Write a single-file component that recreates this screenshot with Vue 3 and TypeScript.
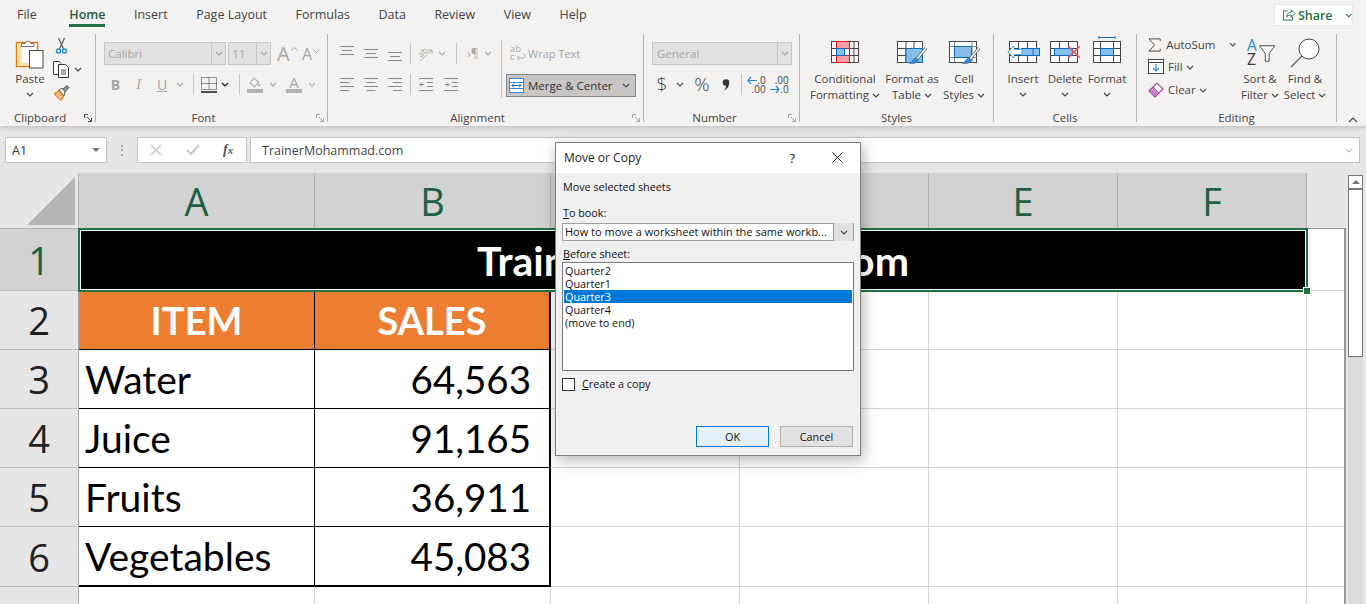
<template>
  <div class="app">
    <svg class="defs" width="0" height="0" aria-hidden="true">
      <symbol id="chev" viewBox="0 0 8 5"><path d="M1 1l3 3 3-3" fill="none" stroke="currentColor" stroke-width="1.1" /></symbol>
      <symbol id="launch" viewBox="0 0 9 9"><path d="M.5 4V.5H4M3 3l4 4M7.5 4v3.500H4" fill="none" stroke="currentColor" /></symbol>
    </svg>

    <header class="ribbon">
      <div class="tabs">
        <nav class="tab-list">
          <span v-for="t in tabs" :key="t" class="tab" :class="{ active: t === 'Home' }">{{ t }}</span>
        </nav>
        <div class="share">
          <svg width="15" height="14" viewBox="0 0 15 14"><path d="M6 2.500H1.500v10h10V9M5 9c0-3 2-5 5-5V1.500l4 4-4 4V7C8 7 6 7.500 5 9z" fill="none" stroke="#1e6e42" /></svg>
          <b>Share</b>
          <svg class="chev share-chev"><use href="#chev" /></svg>
        </div>
      </div>

      <div class="groups">
        <!-- clipboard -->
        <section class="group g-clip">
          <div class="body clip-body">
            <div class="big paste">
              <svg class="icon" width="30" height="32" viewBox="0 0 30 32">
                <rect x="1.500" y="5.500" width="21" height="24" fill="#fff" stroke="#e07b10" stroke-width="1.400" />
                <rect x="2.500" y="6.500" width="4" height="22" fill="#fbdfa6" />
                <rect x="2.500" y="26" width="12" height="3" fill="#fbdfa6" />
                <path d="M6.500 9.500V6.500h4a2.500 2.500 0 0 1 5 0h3.500v3z" fill="#fff" stroke="#777" />
                <rect x="14.500" y="13.500" width="13.500" height="17.500" fill="#fff" stroke="#444" />
              </svg>
              <span>Paste</span>
              <svg class="chev"><use href="#chev" /></svg>
            </div>
            <div class="clip-tools">
              <svg width="13" height="17" viewBox="0 0 13 17">
                <path d="M3.500 1l5 11M9.500 1l-5 11" fill="none" stroke="#555" stroke-width="1.200" />
                <circle cx="3.500" cy="14" r="2" fill="#fff" stroke="#2b88d8" stroke-width="1.500" />
                <circle cx="9.500" cy="14" r="2" fill="#fff" stroke="#2b88d8" stroke-width="1.500" />
              </svg>
              <div class="copy-row">
                <svg width="17" height="17" viewBox="0 0 17 17">
                  <path d="M5.500 13.500h-5V.5h6l1.500 2" fill="#fff" stroke="#333" />
                  <path d="M5.500 3.500h7l3 3v10h-10z" fill="#fff" stroke="#333" />
                  <path d="M8 9h5M8 11h5M8 13h5" stroke="#555" />
                </svg>
                <svg class="chev"><use href="#chev" /></svg>
              </div>
              <svg width="17" height="16" viewBox="0 0 17 16">
                <path d="M1 9l5-4 5 6-3 4.500z" fill="#f7a95a" stroke="#e07b10" />
                <path d="M4 11l2-1M6 13l2-2" stroke="#fff" />
                <path d="M6 5l3-2 3 4-1 4z" fill="#fff" stroke="#555" />
                <path d="M10 4l4-3.500 2 2L12 7" fill="#8a8a8a" stroke="#555" />
              </svg>
            </div>
          </div>
          <div class="label">Clipboard<svg class="launch launch-on"><use href="#launch" /></svg></div>
        </section>

        <!-- font -->
        <section class="group g-font">
          <div class="body">
            <div class="row1 font-row1">
              <div class="select font-name"><span>Calibri</span><i><svg class="chev"><use href="#chev" /></svg></i></div>
              <div class="select font-size"><span>11</span><i><svg class="chev"><use href="#chev" /></svg></i></div>
              <span class="grow-a big-a">A<svg width="7" height="4" viewBox="0 0 7 4"><path d="M.5 3.500l3-3 3 3" fill="none" stroke="#a6a6a6" /></svg></span>
              <span class="grow-a small-a">A<svg width="7" height="4" viewBox="0 0 7 4"><path d="M.5.5l3 3 3-3" fill="none" stroke="#a6a6a6" /></svg></span>
            </div>
            <div class="row2 font-row2">
              <b class="gl serif">B</b>
              <i class="gl">I</i>
              <u class="gl">U</u>
              <svg class="chev dim"><use href="#chev" /></svg>
              <span class="vsep"></span>
              <svg width="16" height="16" viewBox="0 0 16 16">
                <path d="M.5.5h15v12H.5z" fill="none" stroke="#333" stroke-dasharray="1 1" />
                <path d="M8 .5v12M.5 6.500h15" stroke="#333" stroke-dasharray="1 1" />
                <path d="M0 15h16" stroke="#111" stroke-width="1.500" />
              </svg>
              <svg class="chev dark"><use href="#chev" /></svg>
              <span class="vsep"></span>
              <svg width="16" height="17" viewBox="0 0 16 17">
                <path d="M3 7l4-5 4.500 4-4 5z" fill="none" stroke="#b0b0b0" stroke-width="1.200" />
                <path d="M12 7l1.500 3h-3z" fill="#b0b0b0" />
                <rect y="13" width="16" height="4" fill="#b3b3b3" />
              </svg>
              <svg class="chev dim"><use href="#chev" /></svg>
              <span class="color-a">A<em></em></span>
              <svg class="chev dim"><use href="#chev" /></svg>
            </div>
          </div>
          <div class="label">Font<svg class="launch"><use href="#launch" /></svg></div>
        </section>

        <!-- alignment -->
        <section class="group g-align">
          <div class="body align-body">
            <div class="align-left">
              <div class="row1 align-row1">
                <svg class="lines" width="14" height="15" viewBox="0 0 14 15"><path d="M0 .5h14M2 4.500h10M0 8.500h14" /></svg>
                <svg class="lines" width="14" height="15" viewBox="0 0 14 15"><path d="M0 3.500h14M2 7.500h10M0 11.500h14" /></svg>
                <svg class="lines" width="14" height="15" viewBox="0 0 14 15"><path d="M0 6.500h14M2 10.500h10M0 14.500h14" /></svg>
                <span class="vsep"></span>
                <svg class="orient-ic" width="16" height="15" viewBox="0 0 16 15">
                  <text x="1" y="10" transform="rotate(-45 5 7)" class="orient">ab</text>
                  <path d="M3 15L15 4M15 4h-4M15 4v4" fill="none" stroke="#b0b0b0" />
                </svg>
                <svg class="chev dim"><use href="#chev" /></svg>
                <span class="vsep"></span>
                <span class="pil">›¶</span>
                <svg class="chev dim"><use href="#chev" /></svg>
              </div>
              <div class="row2 align-row2">
                <svg class="lines" width="14" height="14" viewBox="0 0 14 14"><path d="M0 .5h14M0 4.500h9M0 8.500h14M0 12.500h9" /></svg>
                <svg class="lines" width="14" height="14" viewBox="0 0 14 14"><path d="M0 .5h14M2.500 4.500h9M0 8.500h14M2.500 12.500h9" /></svg>
                <svg class="lines" width="14" height="14" viewBox="0 0 14 14"><path d="M0 .5h14M5 4.500h9M0 8.500h14M5 12.500h9" /></svg>
                <span class="vsep"></span>
                <svg class="lines" width="14" height="14" viewBox="0 0 14 14"><path d="M0 .5h14M8 4.500h6M8 8.500h6M0 12.500h14M5 6.500H1M3 4.500l-2 2 2 2" /></svg>
                <svg class="lines" width="14" height="14" viewBox="0 0 14 14"><path d="M0 .5h14M8 4.500h6M8 8.500h6M0 12.500h14M1 6.500h4M3 4.500l2 2-2 2" /></svg>
              </div>
            </div>
            <span class="vsep tall"></span>
            <div class="align-right">
              <div class="wrap-text">
                <span class="wrap-ic"><em>ab</em><em>c</em><svg width="10" height="8" viewBox="0 0 10 8"><path d="M1 5h6c3 0 3-4 0-4M3 3L1 5l2 2" fill="none" stroke="#b0b0b0" /></svg></span>
                <span>Wrap Text</span>
              </div>
              <div class="merge">
                <svg width="15" height="15" viewBox="0 0 15 15">
                  <rect x=".5" y=".5" width="14" height="14" fill="#fff" stroke="#2b88d8" />
                  <path d="M0 4.500h15M0 10.500h15" stroke="#2b88d8" />
                  <path d="M3 7.500h9M5 5.500l-2 2 2 2M10 5.500l2 2-2 2" fill="none" stroke="#0f6cbd" />
                </svg>
                <span>Merge &amp; Center</span>
                <svg class="chev merge-chev"><use href="#chev" /></svg>
              </div>
            </div>
          </div>
          <div class="label">Alignment<svg class="launch"><use href="#launch" /></svg></div>
        </section>

        <!-- number -->
        <section class="group g-num">
          <div class="body">
            <div class="row1 num-row1">
              <div class="select num-format"><span>General</span><i><svg class="chev"><use href="#chev" /></svg></i></div>
            </div>
            <div class="row2 num-row2">
              <span class="sym">$</span>
              <svg class="chev"><use href="#chev" /></svg>
              <span class="sym">%</span>
              <svg width="8" height="12" viewBox="0 0 8 12"><circle cx="4" cy="3.500" r="3.300" fill="#333" /><path d="M7 4c0 4-2 6-5 7.500C4.500 9 4 7 4 5z" fill="#333" /></svg>
              <span class="vsep"></span>
              <span class="dec"><em><svg width="10" height="9" viewBox="0 0 10 9"><path d="M10 4.500H1M4 1L1 4.500 4 8" fill="none" stroke="#2b88d8" stroke-width="1.200" /></svg>.0</em><em>.00</em></span>
              <span class="dec"><em>.00</em><em><svg width="10" height="9" viewBox="0 0 10 9"><path d="M0 4.500h9M6 1l3 3.500L6 8" fill="none" stroke="#2b88d8" stroke-width="1.200" /></svg>.0</em></span>
            </div>
          </div>
          <div class="label">Number<svg class="launch"><use href="#launch" /></svg></div>
        </section>

        <!-- styles -->
        <section class="group g-styles">
          <div class="body big-row">
            <div class="big cond">
              <svg class="icon" width="28" height="22" viewBox="0 0 28 22">
                <rect x=".5" y=".5" width="27" height="21" fill="#fff" stroke="#444" />
                <path d="M.5 7.500h27M.5 14.500h27M5.500.5v21M18.500.5v21M23 .5v21" stroke="#444" />
                <rect x="5.500" y=".5" width="13" height="7" fill="#ff9ca6" stroke="#e81123" />
                <rect x="5.500" y="14.500" width="13" height="7" fill="#ff9ca6" stroke="#e81123" />
                <rect x="5.500" y="7.500" width="8" height="7" fill="#83beec" stroke="#0f6cbd" />
              </svg>
              <span>Conditional</span>
              <span>Formatting<svg class="chev inl"><use href="#chev" /></svg></span>
            </div>
            <div class="big fmt-table">
              <svg class="icon" width="30" height="26" viewBox="0 0 30 26">
                <rect x=".5" y=".5" width="25" height="21" fill="#fff" stroke="#444" />
                <path d="M.5 7.500h25M.5 14.500h25M9 .5v21M17 .5v21" stroke="#444" />
                <rect x="9" y="7.500" width="16.500" height="14" fill="#83beec" stroke="#0f6cbd" />
                <path d="M29 7l-9 11" stroke="#666" stroke-width="3" />
                <path d="M29 7l-9 11" stroke="#fff" stroke-width="1.400" />
                <path d="M19 17c-3 0-3 4-7 5 5 2 9-1 10-3z" fill="#2b88d8" stroke="#666" stroke-width=".6" />
              </svg>
              <span>Format as</span>
              <span>Table<svg class="chev inl"><use href="#chev" /></svg></span>
            </div>
            <div class="big cell-styles">
              <svg class="icon" width="31" height="26" viewBox="0 0 31 26">
                <rect x=".5" y=".5" width="27" height="21" fill="#fff" stroke="#444" />
                <path d="M.5 5.500h27M.5 16.500h27M5.500.5v21M23 .5v21" stroke="#888" />
                <rect x="5.500" y="5.500" width="17" height="11" fill="#83beec" stroke="#0f6cbd" />
                <path d="M30 7l-9 11" stroke="#666" stroke-width="3" />
                <path d="M30 7l-9 11" stroke="#fff" stroke-width="1.400" />
                <path d="M20 17c-3 0-3 4-7 5 5 2 9-1 10-3z" fill="#2b88d8" stroke="#666" stroke-width=".6" />
              </svg>
              <span>Cell</span>
              <span>Styles<svg class="chev inl"><use href="#chev" /></svg></span>
            </div>
          </div>
          <div class="label">Styles</div>
        </section>

        <!-- cells -->
        <section class="group g-cells">
          <div class="body big-row">
            <div class="big cell-btn">
              <svg class="icon" width="33" height="22" viewBox="0 0 33 22">
                <rect x="2.500" y=".5" width="27" height="21" fill="#fff" stroke="#444" />
                <path d="M2.500 14.500h27M2.500 7.500h10M11.500.5v21M20.500.5v21" stroke="#444" />
                <rect x="14.500" y="7.500" width="18" height="7" fill="#83beec" stroke="#0f6cbd" />
                <path d="M26 14.500v-7" stroke="#0f6cbd" />
                <path d="M.8 11L7 5v3.500h8v5H7V17z" fill="#fff" stroke="#4aa3e0" />
              </svg>
              <span>Insert</span>
              <svg class="chev"><use href="#chev" /></svg>
            </div>
            <div class="big cell-btn">
              <svg class="icon" width="31" height="22" viewBox="0 0 31 22">
                <rect x=".5" y=".5" width="27" height="21" fill="#fff" stroke="#444" />
                <path d="M.5 7.500h27M.5 14.500h27M9.500.5v21M18.500.5v21" stroke="#444" />
                <rect x="4.500" y="7.500" width="18" height="7" fill="#83beec" stroke="#0f6cbd" />
                <path d="M18 5l12 12M30 5L18 17" stroke="#f0525f" stroke-width="1.600" />
              </svg>
              <span>Delete</span>
              <svg class="chev"><use href="#chev" /></svg>
            </div>
            <div class="big cell-btn">
              <svg class="icon format-ic" width="28" height="27" viewBox="0 0 28 27">
                <path d="M6 1.500h16M6 0v3M22 0v3" stroke="#0f6cbd" fill="none" />
                <rect x=".5" y="5.500" width="27" height="21" fill="#fff" stroke="#444" />
                <path d="M.5 12.500h27M.5 19.500h27M7.500 5.500v21M20.500 5.500v21" stroke="#444" />
                <rect x="7.500" y="12.500" width="13" height="7" fill="#83beec" stroke="#0f6cbd" />
              </svg>
              <span>Format</span>
              <svg class="chev"><use href="#chev" /></svg>
            </div>
          </div>
          <div class="label">Cells</div>
        </section>

        <!-- editing -->
        <section class="group g-edit">
          <div class="body edit-body">
            <div class="edit-list">
              <div class="edit-item">
                <svg width="14" height="14" viewBox="0 0 14 14"><path d="M13 3V.5H1l6 6.500-6 6.500h12V11" fill="none" stroke="#444" /></svg>
                <span>AutoSum</span>
                <svg class="chev sum-chev"><use href="#chev" /></svg>
              </div>
              <div class="edit-item">
                <svg width="16" height="15" viewBox="0 0 16 15"><rect x=".5" y=".5" width="15" height="14" fill="#fff" stroke="#444" /><path d="M.5 3.500h15" stroke="#444" /><path d="M8 5v7M5 9l3 3 3-3" fill="none" stroke="#2b88d8" stroke-width="1.200" /></svg>
                <span>Fill<svg class="chev inl"><use href="#chev" /></svg></span>
              </div>
              <div class="edit-item">
                <svg width="16" height="16" viewBox="0 0 16 16"><path d="M1 9l8-8 6 6-8 8z" fill="#fff" stroke="#a24aa8" stroke-width="1.200" /><path d="M1 9l4-4 6 6-4 4z" fill="#c780c9" stroke="#a24aa8" /></svg>
                <span>Clear<svg class="chev inl"><use href="#chev" /></svg></span>
              </div>
            </div>
            <div class="big sort">
              <div class="sort-ic">
                <span class="letters"><em>A</em><em>Z</em></span>
                <svg width="17" height="17" viewBox="0 0 17 17"><path d="M.5.5h16l-6 8v8h-4v-8z" fill="#fff" stroke="#444" /></svg>
              </div>
              <span>Sort &amp;</span>
              <span>Filter<svg class="chev inl"><use href="#chev" /></svg></span>
            </div>
            <div class="big find">
              <svg class="icon" width="30" height="30" viewBox="0 0 30 30">
                <circle cx="19" cy="11" r="10" fill="#fff" stroke="#444" />
                <path d="M12 18L1 29" stroke="#666" stroke-width="1.300" />
              </svg>
              <span>Find &amp;</span>
              <span>Select<svg class="chev inl"><use href="#chev" /></svg></span>
            </div>
          </div>
          <div class="label">Editing</div>
        </section>

        <svg class="collapse" width="10" height="6" viewBox="0 0 10 6"><path d="M1 5l4-4 4 4" fill="none" stroke="#444" stroke-width="1.100" /></svg>
      </div>
    </header>

    <div class="formula-bar">
      <div class="name-box"><span>A1</span><em></em></div>
      <span class="grip">⋮</span>
      <div class="fx-box">
        <svg width="12" height="12" viewBox="0 0 12 12"><path d="M1 1l10 10M11 1L1 11" stroke="#c8c8c8" stroke-width="1.500" /></svg>
        <svg width="14" height="12" viewBox="0 0 14 12"><path d="M1 6l4 4 8-9" fill="none" stroke="#c8c8c8" stroke-width="2" /></svg>
        <span class="fx"><i>f</i><i class="x">x</i></span>
      </div>
      <div class="formula-input">
        <span>TrainerMohammad.com</span>
        <svg class="chev formula-chev"><use href="#chev" /></svg>
      </div>
    </div>

    <div class="sheet">
      <div class="grid">
        <div class="corner"><span></span></div>
        <div v-for="c in columns" :key="c" class="col-head">{{ c }}</div>
        <div class="after-head"></div>

        <div class="row-head on">1</div>
        <div class="title-cell">
          TrainerMohammad.com
          <span class="sel"><span class="handle"></span></span>
        </div>
        <div class="cell"></div>

        <div class="row-head">2</div>
        <div class="th">ITEM</div>
        <div class="th end">SALES</div>
        <div v-for="n in 5" :key="'h' + n" class="cell"></div>

        <template v-for="(r, i) in items" :key="r.name">
          <div class="row-head">{{ i + 3 }}</div>
          <div class="td" :class="{ last: i === items.length - 1 }">{{ r.name }}</div>
          <div class="td num end" :class="{ last: i === items.length - 1 }">{{ r.sales }}</div>
          <div v-for="n in 5" :key="n" class="cell"></div>
        </template>

        <div class="row-head"></div>
        <div v-for="n in 7" :key="'b' + n" class="cell"></div>
      </div>

      <aside class="scrollbar">
        <div class="scroll-up"><em></em></div>
        <div class="thumb"></div>
      </aside>

      <div class="dialog">
        <div class="dlg-title">
          <span>Move or Copy</span>
          <span class="q">?</span>
          <svg width="11" height="11" viewBox="0 0 11 11"><path d="M.5.5l10 10M10.500.5l-10 10" stroke="#222" /></svg>
        </div>
        <div class="dlg-body">
          <p class="dlg-lead">Move selected sheets</p>
          <label class="dlg-label"><u>T</u>o book:</label>
          <div class="combo">
            <span>How to move a worksheet within the same workb...</span>
            <i><svg class="chev"><use href="#chev" /></svg></i>
          </div>
          <label class="dlg-label before"><u>B</u>efore sheet:</label>
          <ul class="sheet-list">
            <li v-for="s in sheets" :key="s" :class="{ picked: s === 'Quarter3' }">{{ s }}</li>
          </ul>
          <div class="check-row">
            <span class="box"></span>
            <span><u>C</u>reate a copy</span>
          </div>
          <div class="buttons">
            <button class="ok">OK</button>
            <button>Cancel</button>
          </div>
        </div>
      </div>
    </div>
  </div>
</template>

<script setup lang="ts">
const tabs = ['File', 'Home', 'Insert', 'Page Layout', 'Formulas', 'Data', 'Review', 'View', 'Help']
const columns = ['A', 'B', 'C', 'D', 'E', 'F']

const items = [
  { name: 'Water', sales: '64,563' },
  { name: 'Juice', sales: '91,165' },
  { name: 'Fruits', sales: '36,911' },
  { name: 'Vegetables', sales: '45,083' }
]

const sheets = ['Quarter2', 'Quarter1', 'Quarter3', 'Quarter4', '(move to end)']
</script>

<style>
html, body {
  margin: 0;
  overflow: hidden;
}
</style>

<style scoped>
.app {
  width: 1366px;
  height: 604px;
  overflow: hidden;
  display: flex;
  flex-direction: column;
  background: #e6e6e6;
  color: #444;
  font-family: "Open Sans", "Noto Sans", sans-serif;
  font-size: 11.5px;
}

.defs {
  position: absolute;
}

.chev {
  width: 8px;
  height: 5px;
  color: #444;
  display: block;
}
.chev.dim {
  color: #a6a6a6;
}
.chev.dark {
  color: #111;
}
.chev.inl {
  display: inline-block;
  margin-left: 3px;
  vertical-align: 1px;
}

/* ribbon */
.ribbon {
  height: 126px;
  flex: none;
  background: #f3f2f1;
  box-shadow: 0 2px 5px rgba(0, 0, 0, 0.16);
  position: relative;
  z-index: 1;
}
.tabs {
  height: 34px;
  display: flex;
  justify-content: space-between;
}
.tab-list {
  display: flex;
  padding-left: 17px;
  gap: 28.5px;
}
.tab {
  height: 24px;
  line-height: 30px;
  font-size: 12.5px;
  color: #444;
  position: relative;
}
.tab:first-child {
  margin-right: 4px;
}
.tab.active {
  color: #1f5c3d;
  font-weight: 600;
}
.tab.active::after {
  content: "";
  position: absolute;
  left: 0;
  right: 0;
  bottom: -3px;
  height: 3px;
  background: #217346;
}
.share {
  width: 79px;
  height: 22px;
  box-sizing: border-box;
  margin: 4px 13px 0 0;
  padding-left: 7px;
  background: #fff;
  border: 1px solid #e6e6e6;
  display: flex;
  align-items: center;
  gap: 2px;
  color: #1e6e42;
  font-size: 12.5px;
}
.share b {
  font-weight: 600;
}
.share-chev {
  margin-left: 10px;
  color: #1e6e42;
}

.groups {
  display: flex;
  height: 88px;
  position: relative;
}
.group {
  flex: none;
  box-sizing: border-box;
  height: 88px;
  border-right: 1px solid #b4b4b4;
  display: flex;
  flex-direction: column;
}
.body {
  height: 76px;
  box-sizing: border-box;
}
.label {
  height: 12px;
  line-height: 16px;
  text-align: center;
  position: relative;
  font-size: 11.5px;
}
.launch {
  width: 9px;
  height: 9px;
  position: absolute;
  right: 2px;
  top: 4px;
  color: #a6a6a6;
}
.launch-on {
  color: #444;
}
.g-clip { width: 96px; }
.g-font { width: 232px; }
.g-align { width: 316px; }
.g-num { width: 156px; }
.g-styles { width: 194px; }
.g-cells { width: 143px; }
.g-edit { width: 200px; }

.g-clip .label {
  text-align: left;
  padding-left: 14px;
}
.g-font .label { padding-right: 16px; }
.g-align .label { padding-right: 16px; }
.g-num .label { padding-right: 14px; }

.big {
  display: flex;
  flex-direction: column;
  align-items: center;
  line-height: 16px;
  white-space: nowrap;
}
.big > span {
  display: block;
}
.big > .chev {
  margin-top: 5px;
}

/* clipboard */
.clip-body {
  display: flex;
  padding: 3px 0 0 14px;
}
.paste {
  width: 32px;
  height: 65px;
}
.paste .icon {
  margin-bottom: 2px;
}
.clip-tools {
  margin-left: 7px;
  display: flex;
  flex-direction: column;
  gap: 7px;
  align-items: flex-start;
}
.clip-tools > svg:first-child {
  margin-left: 2px;
}
.copy-row {
  display: flex;
  align-items: center;
  gap: 4px;
}

/* select boxes */
.select {
  height: 23px;
  box-sizing: border-box;
  background: #e1e1e1;
  border: 1px solid #c6c6c6;
  display: flex;
  align-items: center;
  color: #a6a6a6;
  padding-left: 3px;
  font-size: 11.5px;
}
.select span {
  flex: 1;
}
.select i {
  width: 13px;
  height: 100%;
  border-left: 1px solid #c6c6c6;
  display: flex;
  align-items: center;
  justify-content: center;
}
.select .chev {
  color: #a6a6a6;
}
.row1,
.row2 {
  display: grid;
  align-items: center;
  justify-items: center;
  height: 23px;
  margin-top: 8px;
}
.vsep {
  width: 1px;
  height: 21px;
  background: #c8c6c4;
}
.vsep.tall {
  height: 58px;
  margin-top: 6px;
  flex: none;
}

/* font */
.font-row1 {
  margin-left: 8px;
  width: 216px;
  display: flex;
}
.font-name { width: 123px; }
.font-size { width: 43px; margin-left: 2px; }
.grow-a {
  color: #a6a6a6;
  line-height: 1;
  display: flex;
  align-items: flex-start;
}
.grow-a svg {
  margin: 3px 0 0 1px;
}
.big-a {
  font-size: 20px;
  margin-left: 6px;
  width: 25px;
}
.small-a {
  font-size: 16px;
}
.font-row2 {
  grid-template-columns: 23px 23px 24px 12px 14px 17px 16px 12px 20px 15px 28px 8px;
  margin-left: 8px;
  width: 212px;
}
.gl {
  font-size: 14px;
  color: #a6a6a6;
  font-family: "Open Sans", sans-serif;
}
.gl.serif {
  font-weight: 700;
}
i.gl {
  font-family: "Liberation Serif", serif;
}
.color-a {
  font-size: 15px;
  color: #a6a6a6;
  line-height: 13px;
  width: 16px;
  text-align: center;
}
.color-a em {
  display: block;
  height: 4px;
  background: #b3b3b3;
}

/* alignment */
.align-body {
  display: flex;
}
.align-left {
  width: 173px;
  padding-left: 7px;
  box-sizing: border-box;
}
.lines {
  fill: none;
  stroke: #8a8a8a;
}
.orient-ic {
  overflow: visible;
}
.orient {
  font-size: 8.5px;
  fill: #a6a6a6;
}
.align-row1 {
  grid-template-columns: 24px 24px 24px 6px 24px 10px 18px 16px 14px;
  justify-content: start;
}
.align-row2 {
  grid-template-columns: 24px 24px 24px 6px 26px 24px;
  justify-content: start;
}
.pil {
  color: #a6a6a6;
  font-size: 12px;
}
.align-right {
  margin-left: 4px;
}
.wrap-text {
  height: 23px;
  margin-top: 8px;
  display: flex;
  align-items: center;
  gap: 1px;
  padding-left: 4px;
  color: #a6a6a6;
  font-size: 11px;
}
.wrap-ic {
  width: 17px;
  height: 17px;
  position: relative;
  font-size: 9.5px;
  line-height: 8px;
}
.wrap-ic em {
  display: block;
  font-style: normal;
}
.wrap-ic svg {
  position: absolute;
  left: 6px;
  top: 8px;
}
.merge {
  width: 130px;
  height: 23px;
  box-sizing: border-box;
  margin-top: 9px;
  background: #c8c6c4;
  border: 1px solid #8a8886;
  display: flex;
  align-items: center;
  padding-left: 2px;
  gap: 4px;
  color: #333;
}
.merge-chev {
  margin-left: auto;
  margin-right: 5px;
}

/* number */
.num-row1 {
  margin-left: 8px;
  justify-items: stretch;
  width: 140px;
}
.num-format span {
  padding-left: 1px;
}
.num-row2 {
  margin-left: 8px;
  grid-template-columns: 20px 16px 28px 20px 10px 21px 21px;
  column-gap: 0;
  justify-content: start;
}
.sym {
  font-size: 19px;
  font-weight: 300;
  color: #444;
  line-height: 1;
}
.dec {
  display: flex;
  flex-direction: column;
  align-items: flex-end;
  font-size: 10px;
  line-height: 9px;
  color: #444;
}
.dec:last-child {
  margin-left: 4px;
}
.dec em {
  font-style: normal;
  display: flex;
  align-items: center;
}

/* styles & cells */
.big-row {
  display: flex;
  padding-top: 3px;
}
.big-row .big {
  height: 73px;
}
.big-row .icon {
  margin: 4px 0 0;
}
.big-row .big > span:first-of-type {
  margin-top: 8px;
}
.big-row .fmt-table > span:first-of-type,
.big-row .cell-styles > span:first-of-type {
  margin-top: 4px;
}
.cond {
  width: 74px;
  margin-left: 8px;
}
.fmt-table {
  width: 60px;
  margin-left: 0;
}
.cell-styles {
  width: 44px;
}
.g-cells .big-row {
  padding-left: 8px;
}
.cell-btn {
  width: 42px;
}
.big-row .format-ic {
  margin-top: -1px;
}

/* editing */
.edit-body {
  display: flex;
}
.edit-list {
  width: 88px;
  flex: none;
  margin-left: 11px;
  display: flex;
  flex-direction: column;
}
.edit-item {
  height: 23px;
  display: flex;
  align-items: center;
  gap: 4px;
}
.edit-item:first-child {
  height: 21px;
}
.edit-item:first-child span {
  margin-left: 1px;
}
.sum-chev {
  margin-left: 9px;
}
.sort,
.find {
  height: 73px;
  padding-top: 3px;
  flex: none;
}
.sort {
  width: 48px;
}
.find {
  width: 42px;
}
.find .icon {
  margin: 1px 0 3px;
}
.sort-ic {
  display: flex;
  width: 30px;
  height: 28px;
  margin: 1px 0 5px;
}
.letters {
  width: 12px;
  padding-left: 2px;
  font-size: 15.5px;
  line-height: 14px;
}
.letters em {
  display: block;
  font-style: normal;
  color: #333;
}
.letters em:first-child {
  color: #2b88d8;
}
.sort-ic svg {
  margin-top: 7px;
}
.collapse {
  margin: 83px 0 0 11px;
}

/* formula bar */
.formula-bar {
  height: 26px;
  margin-top: 11px;
  flex: none;
  display: flex;
  padding-left: 5px;
}
.name-box,
.fx-box,
.formula-input {
  box-sizing: border-box;
  height: 26px;
  background: #fff;
  border: 1px solid #c6c6c6;
  display: flex;
  align-items: center;
}
.name-box {
  width: 102px;
  padding: 0 6px;
  justify-content: space-between;
  font-size: 12.5px;
  color: #333;
}
.name-box em {
  border: 4px solid transparent;
  border-top: 4px solid #777;
  border-bottom: 0;
}
.grip {
  width: 30px;
  text-align: center;
  line-height: 26px;
  color: #9a9a9a;
  font-size: 14px;
}
.fx-box {
  width: 110px;
  padding-left: 12px;
  gap: 24px;
}
.fx {
  color: #555;
  font-family: "Liberation Serif", serif;
  font-size: 14px;
  font-weight: 700;
  margin-left: -1px;
}
.fx .x {
  font-size: 11px;
}
.formula-input {
  width: 1110px;
  margin-left: 3px;
  padding: 0 6px 0 11px;
  justify-content: space-between;
  font-size: 12.5px;
  color: #444;
}
.formula-chev {
  color: #bdbdbd;
}

/* sheet */
.sheet {
  margin-top: 10px;
  flex: 1;
  min-height: 0;
  display: flex;
  position: relative;
}
.grid {
  width: 1345px;
  flex: none;
  display: grid;
  grid-template-columns: 79px 236px 236px 189px 189px 189px 189px 38px;
  grid-template-rows: 56px 62px 59px 59px 59px 59px 60px 40px;
  background: #fff;
}
.corner {
  background: #e6e6e6;
  border-right: 1px solid #b1b1b1;
  border-bottom: 1px solid #b1b1b1;
  position: relative;
}
.corner span {
  position: absolute;
  left: 27px;
  top: 4px;
  width: 48px;
  height: 48px;
  background: #b4b4b4;
  clip-path: polygon(100% 0, 100% 100%, 0 100%);
}
.col-head {
  background: #d2d2d2;
  border-right: 1px solid #b1b1b1;
  border-bottom: 1px solid #d2d2d2;
  display: flex;
  align-items: center;
  justify-content: center;
  font-size: 38px;
  color: #1c5f43;
}
.after-head {
  background: #e6e6e6;
  border-bottom: 1px solid #9a9a9a;
}
.row-head {
  background: #e6e6e6;
  border-right: 1px solid #a8a8a8;
  border-bottom: 1px solid #bdbdbd;
  display: flex;
  align-items: center;
  justify-content: center;
  font-size: 38px;
  color: #222;
  box-sizing: border-box;
}
.row-head.on {
  background: #d2d2d2;
  color: #1c5f43;
}
.title-cell {
  grid-column: span 6;
  background: #000;
  color: #fff;
  font-family: Lato, "Open Sans", sans-serif;
  font-weight: 700;
  font-size: 41px;
  display: flex;
  align-items: center;
  justify-content: center;
  position: relative;
  white-space: nowrap;
}
.sel {
  position: absolute;
  left: -1px;
  top: -1px;
  right: -1px;
  bottom: -1px;
  border: 2px solid #217346;
  box-shadow: inset 0 0 0 1px #fff;
}
.handle {
  position: absolute;
  right: -5px;
  bottom: -5px;
  width: 6px;
  height: 6px;
  background: #217346;
  border: 1px solid #fff;
}
.cell {
  border-right: 1px solid #d4d4d4;
  border-bottom: 1px solid #d4d4d4;
}
.th,
.td {
  box-sizing: border-box;
  font-family: Lato, "Open Sans", sans-serif;
  font-size: 38px;
  border-right: 1px solid #000;
  border-bottom: 1px solid #000;
  display: flex;
  align-items: center;
  white-space: nowrap;
}
.th {
  background: #ed7d31;
  color: #fff;
  font-weight: 700;
  justify-content: center;
}
.td {
  color: #000;
  font-size: 39px;
  padding-left: 6px;
}
.td.num {
  font-size: 38.5px;
  justify-content: flex-end;
  padding-right: 18px;
}
.end {
  border-right-width: 2px;
}
.td.last {
  border-bottom-width: 2px;
}

/* scrollbar */
.scrollbar {
  flex: 1;
  box-sizing: border-box;
  padding: 2px 3px 0 4px;
  margin-left: -1px;
  display: flex;
  flex-direction: column;
  position: relative;
  background: linear-gradient(#dcdcdc, #dcdcdc) no-repeat 4px 17px / 15px 100%;
}
.scrollbar::before {
  content: "";
  position: absolute;
  left: 0;
  top: 55px;
  bottom: 0;
  width: 2px;
  background: #9a9a9a;
}
.scroll-up {
  height: 15px;
  box-sizing: border-box;
  background: #fff;
  border: 1px solid #777;
  border-bottom-width: 2px;
  display: flex;
  align-items: center;
  justify-content: center;
}
.scroll-up em {
  border: 4px solid transparent;
  border-bottom: 4px solid #777;
  border-top: 0;
}
.thumb {
  height: 167px;
  box-sizing: border-box;
  background: #fff;
  border: 1px solid #777;
  border-top: 0;
}

/* dialog */
.dialog {
  position: absolute;
  left: 555px;
  top: -31px;
  width: 306px;
  height: 314px;
  box-sizing: border-box;
  border: 1px solid #7f7f7f;
  background: #f0f0f0;
  box-shadow: 2px 4px 14px rgba(0, 0, 0, 0.3);
  display: flex;
  flex-direction: column;
  color: #111;
  font-size: 10.8px;
  z-index: 2;
}
.dlg-title {
  height: 30px;
  box-sizing: border-box;
  padding: 0 17px 1px 8px;
  flex: none;
  background: #fff;
  display: flex;
  align-items: center;
  font-size: 12px;
  color: #222;
}
.dlg-title span:first-child {
  flex: 1;
}
.q {
  margin-right: 37px;
  font-size: 13px;
}
.dlg-body {
  flex: 1;
  padding: 6px 6px 8px;
  display: flex;
  flex-direction: column;
}
.dlg-lead {
  margin: 0 0 0 1px;
  line-height: 15px;
}
.dlg-label {
  display: block;
  margin: 11px 0 2px 1px;
  line-height: 15px;
}
.dlg-label.before {
  margin: 5px 0 0 1px;
}
.combo {
  height: 18px;
  box-sizing: border-box;
  width: 292px;
  background: #fff;
  border: 1px solid #a0a0a0;
  display: flex;
  align-items: center;
  padding: 0 0 2px 2px;
  flex: none;
  font-size: 11px;
  margin-top: 1px;
}
.combo span {
  flex: 1;
  white-space: nowrap;
}
.combo i {
  width: 19px;
  height: 18px;
  margin-bottom: -2px;
  background: #e1e1e1;
  border-left: 1px solid #a0a0a0;
  display: flex;
  align-items: center;
  justify-content: center;
}
.sheet-list {
  margin: 1px 0 0;
  padding: 1px;
  list-style: none;
  width: 292px;
  height: 109px;
  box-sizing: border-box;
  background: #fff;
  border: 1px solid #7a7a7a;
}
.sheet-list li {
  height: 13px;
  line-height: 13px;
  padding-left: 1px;
}
.sheet-list li.picked {
  background: #0078d7;
  color: #fff;
}
.check-row {
  margin-top: 6px;
  display: flex;
  align-items: center;
  gap: 7px;
  line-height: 14px;
}
.box {
  width: 13px;
  height: 13px;
  box-sizing: border-box;
  background: #fff;
  border: 1px solid #333;
}
.buttons {
  margin-top: auto;
  display: flex;
  justify-content: flex-end;
  gap: 11px;
  padding-right: 1px;
}
button {
  width: 73px;
  height: 21px;
  box-sizing: border-box;
  font: inherit;
  color: #111;
  background: #e1e1e1;
  border: 1px solid #adadad;
  padding: 0;
}
button.ok {
  background: #e5f1fb;
  border-color: #0078d7;
}
</style>
